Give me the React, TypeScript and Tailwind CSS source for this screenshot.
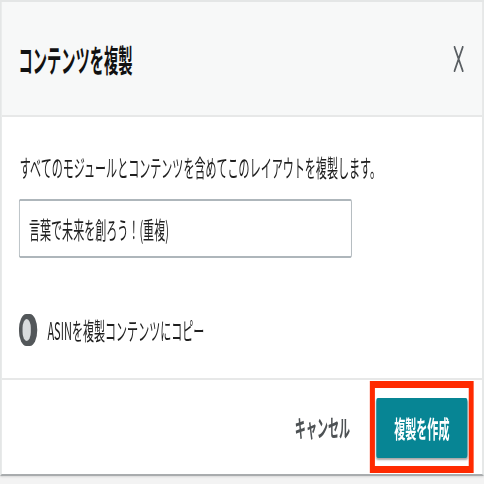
import { useState } from "react";

// The reference is squeezed horizontally, so the dialog is laid out wide and scaled on x.
export default function App() {
  const [name, setName] = useState("言葉で未来を創ろう！(重複)");
  const [copyAsin, setCopyAsin] = useState(false);

  return (
    <div className="w-[484px] h-[484px] overflow-hidden bg-[#f3f3f3] font-['Noto_Sans_CJK_JP','Noto_Sans',sans-serif]">
      <div className="w-[1052px] origin-top-left scale-x-[0.46]">
        <div className="bg-white border-x-[4px] border-t-2 border-b-2 border-x-[#e4e6e6] border-t-[#e4e6e6] border-b-[#a9acae] shadow-sm">
          {/* Header */}
          <div className="h-[115px] flex items-center justify-between pl-[36px] pr-[39px] bg-[#f7f8f8] border-b-2 border-[#e7e8e8]">
            <h2 className="text-[31px] leading-none font-bold text-[#111111]">コンテンツを複製</h2>
            <button className="p-0 text-[#5a5f63]">
              <svg width="24" height="26" viewBox="0 0 24 26" fill="none">
                <path d="M3 1 L21 25 M21 1 L3 25" stroke="currentColor" strokeWidth="3.2" strokeLinecap="round" />
              </svg>
            </button>
          </div>

          {/* Body */}
          <div className="pl-[37px] pr-10 pt-[32px] pb-[32px] h-[261px]">
            <p className="text-[24px] leading-[36px] text-[#1f1f1f] pl-[2px]">
              すべてのモジュールとコンテンツを含めてこのレイアウトを複製します。
            </p>
            <input
              value={name}
              onChange={(e) => setName(e.target.value)}
              className="mt-[14px] w-[724px] h-[59px] px-[20px] text-[24px] text-[#1f1f1f] border-2 border-[#aeb6bb] rounded-[3px] outline-none bg-white"
            />
            <div className="mt-[56px] flex items-center gap-[22px]">
              <button
                onClick={() => setCopyAsin(!copyAsin)}
                className="w-[40px] h-[32px] rounded-full bg-[#53575a] flex items-center pl-[8px]"
              >
                <span className="w-[18px] h-[22px] rounded-full bg-[#d9dcde]" />
              </button>
              <span className="text-[24px] leading-none text-[#1f1f1f]">ASINを複製コンテンツにコピー</span>
            </div>
          </div>

          {/* Footer */}
          <div className="h-[96px] border-t-2 border-[#e7e8e8] flex items-center justify-end gap-[43px] pr-[18px]">
            <button className="text-[24px] font-bold text-[#4d5154] leading-none">キャンセル</button>
            <div className="border-x-[11px] border-y-[7px] border-[#ff2a00] bg-white px-[3px] pt-[10px] pb-[8px]">
              <button className="w-[198px] h-[60px] rounded-[3px] bg-[#078594] text-white text-[24px] font-bold shadow-[0_2px_3px_rgba(0,0,0,0.35)]">
                複製を作成
              </button>
            </div>
          </div>
        </div>
      </div>
    </div>
  );
}
